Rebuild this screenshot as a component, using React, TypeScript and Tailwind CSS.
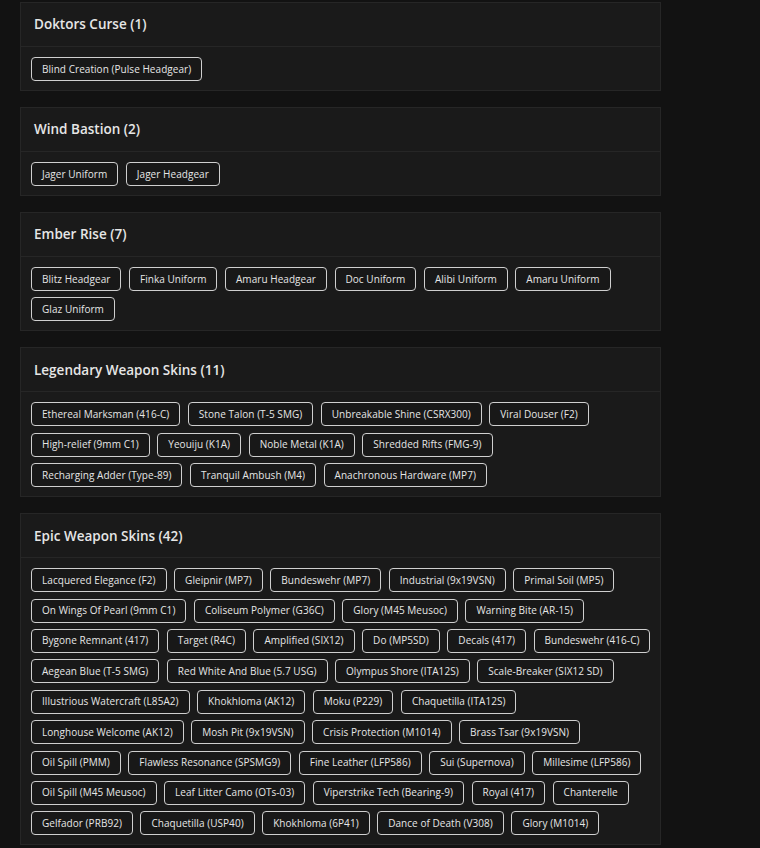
import React from "react";

const sections: { title: string; rows: string[][] }[] = [
  { title: "Doktors Curse (1)", rows: [["Blind Creation (Pulse Headgear)"]] },
  { title: "Wind Bastion (2)", rows: [["Jager Uniform", "Jager Headgear"]] },
  {
    title: "Ember Rise (7)",
    rows: [
      [
        "Blitz Headgear",
        "Finka Uniform",
        "Amaru Headgear",
        "Doc Uniform",
        "Alibi Uniform",
        "Amaru Uniform",
      ],
      ["Glaz Uniform"],
    ],
  },
  {
    title: "Legendary Weapon Skins (11)",
    rows: [
      [
        "Ethereal Marksman (416-C)",
        "Stone Talon (T-5 SMG)",
        "Unbreakable Shine (CSRX300)",
        "Viral Douser (F2)",
      ],
      [
        "High-relief (9mm C1)",
        "Yeouiju (K1A)",
        "Noble Metal (K1A)",
        "Shredded Rifts (FMG-9)",
      ],
      ["Recharging Adder (Type-89)", "Tranquil Ambush (M4)", "Anachronous Hardware (MP7)"],
    ],
  },
  {
    title: "Epic Weapon Skins (42)",
    rows: [
      [
        "Lacquered Elegance (F2)",
        "Gleipnir (MP7)",
        "Bundeswehr (MP7)",
        "Industrial (9x19VSN)",
        "Primal Soil (MP5)",
      ],
      [
        "On Wings Of Pearl (9mm C1)",
        "Coliseum Polymer (G36C)",
        "Glory (M45 Meusoc)",
        "Warning Bite (AR-15)",
      ],
      [
        "Bygone Remnant (417)",
        "Target (R4C)",
        "Amplified (SIX12)",
        "Do (MP5SD)",
        "Decals (417)",
        "Bundeswehr (416-C)",
      ],
      [
        "Aegean Blue (T-5 SMG)",
        "Red White And Blue (5.7 USG)",
        "Olympus Shore (ITA12S)",
        "Scale-Breaker (SIX12 SD)",
      ],
      [
        "Illustrious Watercraft (L85A2)",
        "Khokhloma (AK12)",
        "Moku (P229)",
        "Chaquetilla (ITA12S)",
      ],
      [
        "Longhouse Welcome (AK12)",
        "Mosh Pit (9x19VSN)",
        "Crisis Protection (M1014)",
        "Brass Tsar (9x19VSN)",
      ],
      [
        "Oil Spill (PMM)",
        "Flawless Resonance (SPSMG9)",
        "Fine Leather (LFP586)",
        "Sui (Supernova)",
        "Millesime (LFP586)",
      ],
      [
        "Oil Spill (M45 Meusoc)",
        "Leaf Litter Camo (OTs-03)",
        "Viperstrike Tech (Bearing-9)",
        "Royal (417)",
        "Chanterelle",
      ],
      [
        "Gelfador (PRB92)",
        "Chaquetilla (USP40)",
        "Khokhloma (6P41)",
        "Dance of Death (V308)",
        "Glory (M1014)",
      ],
    ],
  },
];

export default function App() {
  return (
    <div
      className="min-h-screen bg-[#121212] pl-[20px] pt-[2px] pb-4"
      style={{ fontFamily: '"Open Sans", "Liberation Sans", sans-serif' }}
    >
      <div className="flex w-[641px] flex-col gap-4">
        {sections.map((s) => (
          <div key={s.title} className="border border-[#262626] bg-[#1a1a1a]">
            <div className="flex h-[44px] items-center border-b border-[#262626] px-[13px] text-[13.5px] font-semibold text-[#e6e6e6]">
              {s.title}
            </div>
            <div className="flex flex-col gap-y-[6.4px] px-[10px] pt-[10px] pb-[9px]">
              {s.rows.map((row, r) => (
                <div key={r} className="flex flex-nowrap gap-x-[7.5px]">
                  {row.map((it, i) => (
                    <span
                      key={i}
                      className="flex h-[24px] shrink-0 items-center whitespace-nowrap rounded-[4px] border border-[#cfcfcf] bg-[#181818] px-[10px] text-[10px] tracking-[0.05px] text-[#e6e6e6]"
                    >
                      {it}
                    </span>
                  ))}
                </div>
              ))}
            </div>
          </div>
        ))}
      </div>
    </div>
  );
}
